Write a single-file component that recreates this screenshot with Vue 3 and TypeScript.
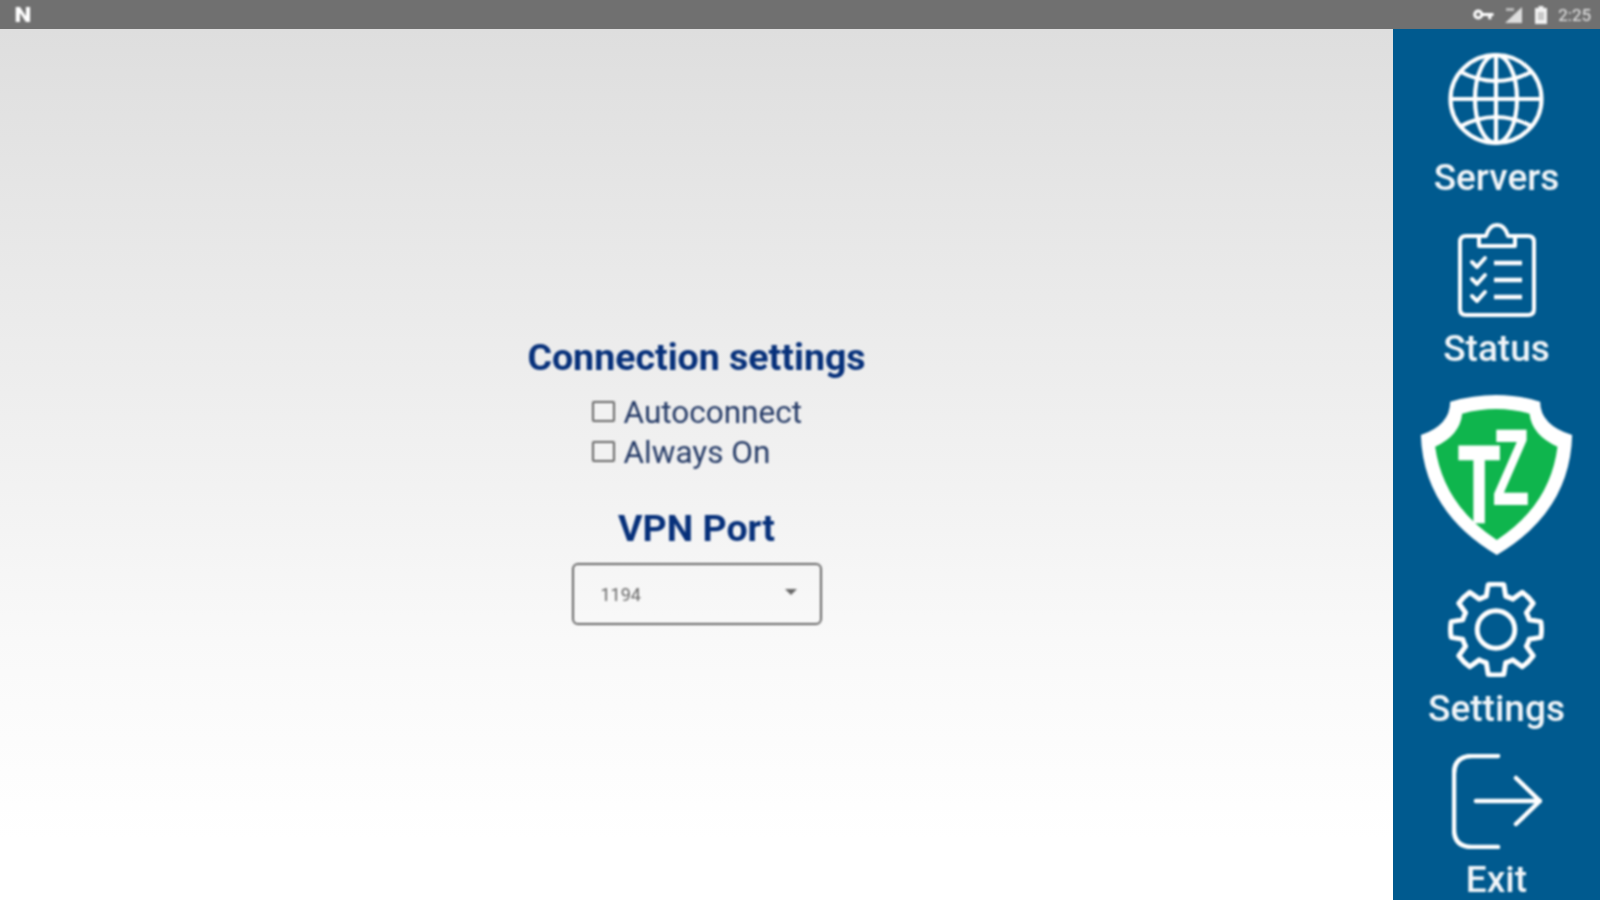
<script setup lang="ts">
import { computed, ref } from 'vue'

const port = ref('1194')

// gear outline, 8 teeth round the middle
const gearPath = computed(() => {
  const teeth = 8
  const cx = 50
  const cy = 50
  const outer = 46
  const inner = 35
  const step = (Math.PI * 2) / teeth
  let d = ''
  for (let i = 0; i < teeth; i++) {
    const a = i * step - Math.PI / 2
    const pts: [number, number][] = [
      [inner, a - step * 0.36],
      [outer, a - step * 0.22],
      [outer, a + step * 0.22],
      [inner, a + step * 0.36],
    ]
    pts.forEach(([r, t], j) => {
      const x = (cx + r * Math.cos(t)).toFixed(1)
      const y = (cy + r * Math.sin(t)).toFixed(1)
      if (i === 0 && j === 0) d += `M${x} ${y}`
      else if (j === 2) d += `A${outer} ${outer} 0 0 1 ${x} ${y}`
      else if (j === 0) d += `A${inner} ${inner} 0 0 1 ${x} ${y}`
      else d += `L${x} ${y}`
    })
  }
  return d + 'Z'
})
</script>

<template>
  <div class="app">
    <header class="status-bar">
      <span class="notif">N</span>
      <div class="status-right">
        <svg class="key" viewBox="0 0 20 12" width="21" height="13">
          <circle cx="5" cy="6" r="3.400" fill="none" stroke="#fff" stroke-width="2.800" />
          <path d="M8 4.500h11.500v3h-2v3h-3v-3H8z" fill="#fff" />
        </svg>
        <svg class="signal" viewBox="0 0 20 18" width="20" height="18">
          <path d="M19 1v16H2z" fill="#ddd" />
          <path d="M3 2h8v3H3z" fill="#bbb" />
        </svg>
        <svg class="battery" viewBox="0 0 12 18" width="12" height="18">
          <path d="M3.500 0h5v2H12v16H0V2h3.500z" fill="#f2f2f2" />
          <rect x="3" y="6" width="6" height="8" fill="#c8c8c8" />
        </svg>
        <span class="time">2:25</span>
      </div>
    </header>

    <div class="body">
      <main class="main">
        <h1 class="title">Connection settings</h1>
        <div class="checks">
          <label class="check"><span class="box"></span>Autoconnect</label>
          <label class="check"><span class="box"></span>Always On</label>
        </div>
        <h2 class="title port-title">VPN Port</h2>
        <div class="select">
          <span>{{ port }}</span>
          <span class="caret"></span>
        </div>
      </main>

      <nav class="sidebar">
        <div class="nav-item">
          <svg class="nav-icon" viewBox="0 0 96 94" width="96" height="94" fill="none" stroke="#fff" stroke-width="4.200">
            <ellipse cx="48" cy="47" rx="45.500" ry="44" />
            <ellipse cx="48" cy="47" rx="21" ry="44" />
            <path d="M48 3v88M2.500 47h91" />
            <path d="M11 19q37 20 74 0M11 75q37-20 74 0" />
          </svg>
          <span class="nav-label">Servers</span>
        </div>

        <div class="nav-item">
          <svg class="nav-icon" viewBox="0 0 78 94" width="78" height="94" fill="none" stroke="#fff" stroke-width="4" stroke-linejoin="round" stroke-linecap="round">
            <path d="M21 13H8q-6 0-6 6v67q0 6 6 6h62q6 0 6-6V19q0-6-6-6H57" />
            <path d="M21 23V13h7q3-11 11-11t11 11h7v10z" />
            <path d="M14 39l5 5 8-9M14 56l5 5 8-9M14 73l5 5 8-9" />
            <path d="M36 40h28M36 57h28M36 74h28" stroke-width="4.500" stroke-linecap="butt" />
          </svg>
          <span class="nav-label">Status</span>
        </div>

        <div class="nav-item">
          <svg class="nav-icon shield" viewBox="90 50 458 486" width="153" height="162">
            <path d="M180 70Q320 30 450 70Q450 140 546 170Q540 400 320 530Q100 400 92 170Q180 140 180 70Z" fill="#fff" />
            <path d="M216 106Q320 78 418 106Q425 170 502 205Q480 380 320 485Q160 380 135 205Q210 170 216 106Z" fill="#0fb54d" />
            <g class="logo-text" fill="#fff">
              <text class="logo-t" transform="translate(205 430) scale(0.62 1)" font-size="327">T</text>
              <text transform="translate(306 380) scale(0.56 1)" font-size="327">Z</text>
            </g>
          </svg>
        </div>

        <div class="nav-item">
          <svg class="nav-icon" viewBox="1 2 98 96" width="98" height="95" fill="none" stroke="#fff" stroke-width="5" stroke-linejoin="round">
            <path :d="gearPath" />
            <circle cx="50" cy="50" r="19" />
          </svg>
          <span class="nav-label">Settings</span>
        </div>

        <div class="nav-item">
          <svg class="nav-icon" viewBox="0 0 90 95" width="90" height="95" fill="none" stroke="#fff" stroke-width="4.500" stroke-linecap="round" stroke-linejoin="round">
            <path d="M46 2H20Q2 2 2 20v55q0 18 18 18h26" />
            <path d="M24 47h64M64 24l24 23-24 23" />
          </svg>
          <span class="nav-label exit-label">Exit</span>
        </div>
      </nav>
    </div>
  </div>
</template>

<style scoped>
.app {
  width: 1600px;
  height: 900px;
  display: flex;
  flex-direction: column;
  overflow: hidden;
  font-family: Roboto, "Liberation Sans", sans-serif;
}

/* the shot is an upscaled one, so the content (not the backgrounds) is soft */
.notif,
.status-right,
.main > *,
.nav-item {
  filter: blur(0.9px);
}

.status-bar {
  height: 29px;
  flex-shrink: 0;
  background: #707070;
  display: flex;
  align-items: center;
  justify-content: space-between;
  padding: 0 9px 0 14px;
  color: #fff;
}

.notif {
  font-size: 20px;
  font-weight: 900;
  line-height: 28px;
  transform: scaleX(1.2);
  margin-left: 2px;
}

.status-right {
  display: flex;
  align-items: center;
  gap: 10px;
}

.key {
  margin-right: -1px;
}

.signal {
  margin-right: 2px;
}

.time {
  font-size: 17px;
  color: #e8e8e8;
  margin-left: 1px;
}

.body {
  flex: 1;
  display: flex;
  min-height: 0;
}

.main {
  width: 1393px;
  flex-shrink: 0;
  background: linear-gradient(180deg, #dedede 0%, #e8e8e8 25%, #f1f1f1 50%, #f9f9f9 70%, #ffffff 93%);
  display: flex;
  flex-direction: column;
  align-items: center;
  padding-top: 308px;
  box-sizing: border-box;
}

.title {
  margin: 0;
  font-size: 37.500px;
  line-height: 40px;
  font-weight: 700;
  color: #06307a;
}

.checks {
  display: flex;
  flex-direction: column;
  gap: 8px;
  margin-top: 20px;
  width: 210px;
}

.check {
  display: flex;
  align-items: center;
  gap: 9px;
  font-size: 31.500px;
  line-height: 32px;
  color: #243a66;
}

.box {
  border: 2px solid #666;
  border-radius: 2px;
  background: #f2f2f2;
  width: 19px;
  height: 17px;
  margin-top: -4px;
  flex-shrink: 0;
}

.port-title {
  margin-top: 39px;
}

.select {
  width: 250px;
  height: 62px;
  margin-top: 15px;
  border: 2px solid #666;
  border-radius: 6px;
  box-sizing: border-box;
  display: flex;
  align-items: center;
  justify-content: space-between;
  padding: 0 23px 0 27px;
  font-size: 18px;
  color: #666;
}

.caret {
  width: 0;
  height: 0;
  border-left: 6px solid transparent;
  border-right: 6px solid transparent;
  border-top: 6px solid #666;
  margin-top: -4px;
}

.sidebar {
  flex: 1;
  background: #005a8f;
  display: flex;
  flex-direction: column;
  align-items: center;
  padding-top: 23px;
  color: #fff;
  overflow: hidden;
  min-height: 0;
}

.nav-item {
  display: flex;
  flex-direction: column;
  align-items: center;
  flex-shrink: 0;
  margin-bottom: 26px;
}

.nav-item:first-child,
.nav-item:nth-child(3),
.nav-item:nth-child(4) {
  margin-bottom: 25px;
}

.nav-item:last-child {
  margin-bottom: 0;
}

.nav-icon {
  display: block;
}

.nav-label {
  margin-top: 12px;
  font-size: 37px;
  line-height: 40px;
  font-weight: 500;
  color: #f2f6f9;
}

/* last label sits right on the bottom edge */
.exit-label {
  margin-top: 14px;
  line-height: 34px;
}

.logo-text {
  font-family: "Liberation Sans", sans-serif;
  font-weight: 700;
}

.logo-t {
  stroke: #fff;
  stroke-width: 8px;
}
</style>
